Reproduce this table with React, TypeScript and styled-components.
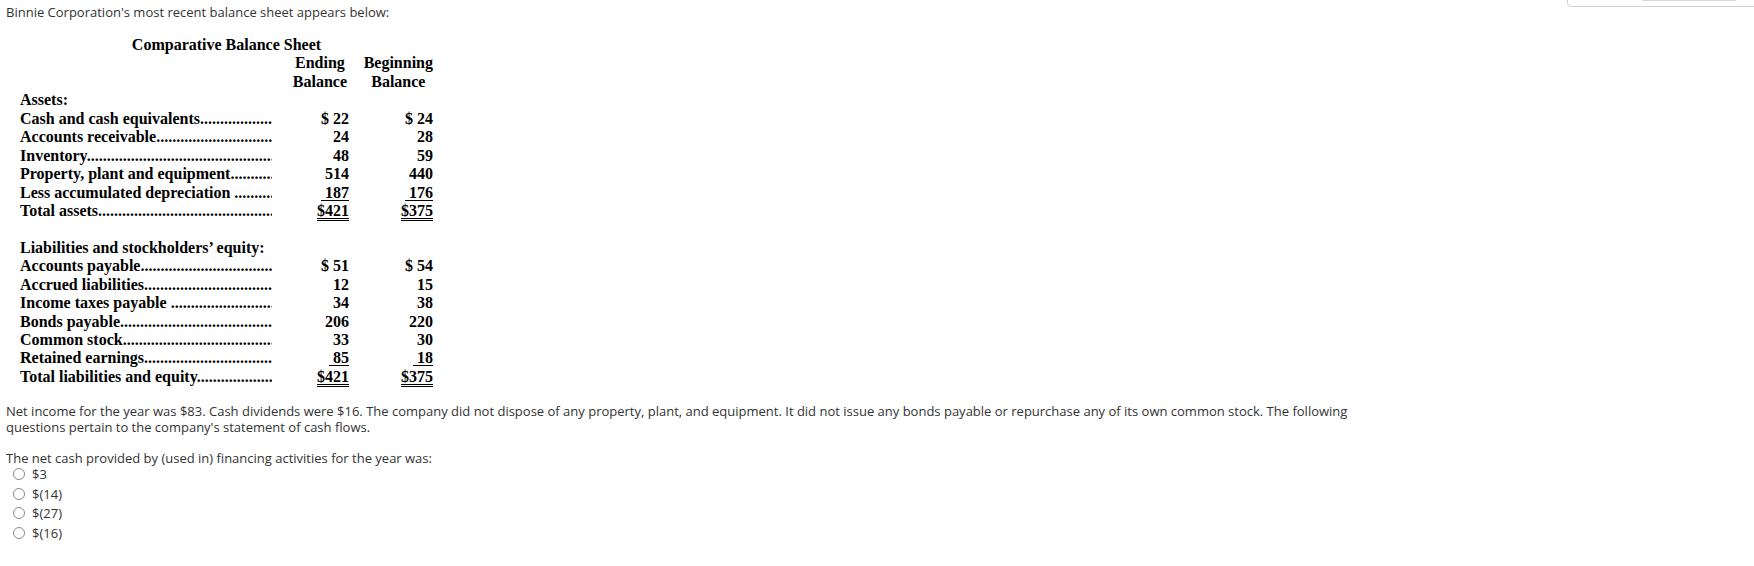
import * as React from 'react'
import styled, {createGlobalStyle} from 'styled-components'

const GlobalStyle = createGlobalStyle`
    html, body {
        margin: 0;
        padding: 0;
        background: #fff;
    }
    body {
        font-family: "Open Sans", "Liberation Sans", sans-serif;
        font-size: 13px;
        color: #333;
    }
`;

const Page = styled.div`
    position: relative;
    padding: 4px 6px;
    width: 1754px;
    height: 566px;
    box-sizing: border-box;
    overflow: hidden;
`;

const CornerBox = styled.div`
    position: absolute;
    top: -20px;
    left: 1567px;
    width: 200px;
    height: 27px;
    border: 1px solid #cfcfcf;
    border-radius: 4px;
    box-sizing: border-box;
`;

const CornerBar = styled.div`
    position: absolute;
    left: 74px;
    bottom: 5px;
    width: 94px;
    height: 1px;
    background: #d6d6d6;
`;

const Text = styled.p<{$gap?: number}>`
    margin: 0 0 ${p => p.$gap ?? 0}px 0;
    line-height: 16px;
    max-width: 1370px;
`;

const Sheet = styled.div`
    width: 413px;
    margin: 16px 0 17px 14px;
    font-family: "Liberation Serif", "Times New Roman", serif;
    font-weight: bold;
    font-size: 16px;
    line-height: 18.45px;
    color: #000;
`;

const Title = styled.div`
    text-align: center;
`;

const Row = styled.div`
    display: grid;
    grid-template-columns: 252px 77px 84px;
    height: 18.45px;
`;

const HeadRow = styled(Row)`
    height: auto;
`;

const Label = styled.div`
    white-space: nowrap;
    overflow: hidden;
`;

const Amount = styled.div`
    text-align: right;
    white-space: pre;
`;

const HeadCell = styled.div<{$pad: number}>`
    text-align: right;
    padding-right: ${p => p.$pad}px;
`;

const HeadStack = styled.span`
    display: inline-block;
    text-align: center;
`;

const Line = styled.span<{$kind: 'single' | 'double'}>`
    text-decoration: underline;
    text-decoration-style: ${p => p.$kind === 'double' ? 'double' : 'solid'};
    text-decoration-thickness: 1px;
    text-underline-offset: 2px;
    white-space: pre;
`;

const Options = styled.div`
    display: flex;
    flex-direction: column;
    gap: 3.5px;
    margin-top: 0;
    padding-left: 7px;
`;

const Option = styled.label`
    display: flex;
    align-items: center;
    gap: 7px;
    height: 16px;
    line-height: 16px;
`;

const Radio = styled.input`
    appearance: none;
    margin: 0;
    width: 12px;
    height: 12px;
    border: 1px solid #8a8a8a;
    border-radius: 50%;
    background: #fff;
    box-sizing: border-box;
`;

type Cell = {v: string; u?: 'single' | 'double'};
type Item = {label?: string; end?: Cell; begin?: Cell};

const DOTS = '.'.repeat(120);

const rows: Item[] = [
    {label: 'Assets:'},
    {label: 'Cash and cash equivalents', end: {v: '$ 22'}, begin: {v: '$ 24'}},
    {label: 'Accounts receivable', end: {v: '24'}, begin: {v: '28'}},
    {label: 'Inventory', end: {v: '48'}, begin: {v: '59'}},
    {label: 'Property, plant and equipment', end: {v: '514'}, begin: {v: '440'}},
    {label: 'Less accumulated depreciation ', end: {v: '\u00a0187', u: 'single'}, begin: {v: '\u00a0176', u: 'single'}},
    {label: 'Total assets', end: {v: '$421', u: 'double'}, begin: {v: '$375', u: 'double'}},
    {},
    {label: 'Liabilities and stockholders\u2019 equity:'},
    {label: 'Accounts payable', end: {v: '$ 51'}, begin: {v: '$ 54'}},
    {label: 'Accrued liabilities', end: {v: '12'}, begin: {v: '15'}},
    {label: 'Income taxes payable ', end: {v: '34'}, begin: {v: '38'}},
    {label: 'Bonds payable', end: {v: '206'}, begin: {v: '220'}},
    {label: 'Common stock', end: {v: '33'}, begin: {v: '30'}},
    {label: 'Retained earnings', end: {v: '\u00a085', u: 'single'}, begin: {v: '\u00a018', u: 'single'}},
    {label: 'Total liabilities and equity', end: {v: '$421', u: 'double'}, begin: {v: '$375', u: 'double'}},
];

const answers = ['$3', '$(14)', '$(27)', '$(16)'];

const renderCell = (c?: Cell) => {
    if (!c) return null;
    return c.u ? <Line $kind={c.u}>{c.v}</Line> : c.v;
};

export default function App(): React.ReactElement {
    return (
        <>
            <GlobalStyle />
            <Page>
                <CornerBox>
                    <CornerBar />
                </CornerBox>

                <Text>Binnie Corporation's most recent balance sheet appears below:</Text>

                <Sheet>
                    <Title>Comparative Balance Sheet</Title>
                    <HeadRow>
                        <div />
                        <HeadCell $pad={2}>
                            <HeadStack>Ending<br />Balance</HeadStack>
                        </HeadCell>
                        <HeadCell $pad={0}>
                            <HeadStack>Beginning<br />Balance</HeadStack>
                        </HeadCell>
                    </HeadRow>
                    {rows.map((r, i) => (
                        <Row key={i}>
                            <Label>
                                {r.label}
                                {r.end && DOTS}
                            </Label>
                            <Amount>{renderCell(r.end)}</Amount>
                            <Amount>{renderCell(r.begin)}</Amount>
                        </Row>
                    ))}
                </Sheet>

                <Text $gap={15}>
                    Net income for the year was $83. Cash dividends were $16. The company did not dispose of any property, plant, and equipment. It did not issue any bonds payable or repurchase any of its own common stock. The following questions pertain to the company's statement of cash flows.
                </Text>

                <Text>The net cash provided by (used in) financing activities for the year was:</Text>
                <Options>
                    {answers.map(a => (
                        <Option key={a}>
                            <Radio type="radio" name="answer" />
                            <span>{a}</span>
                        </Option>
                    ))}
                </Options>
            </Page>
        </>
    )
}
